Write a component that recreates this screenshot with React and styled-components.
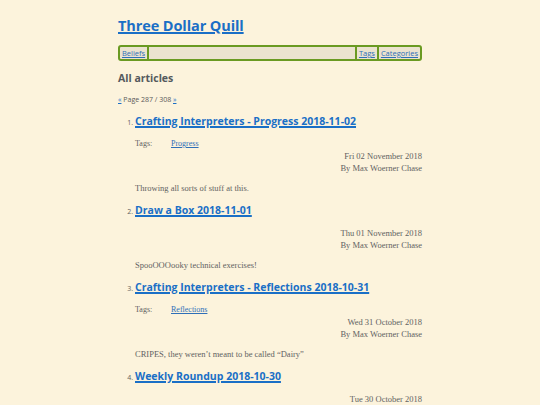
import React from 'react';
import styled, { createGlobalStyle } from 'styled-components';

const GlobalStyle = createGlobalStyle`
  html, body {
    margin: 0;
    padding: 0;
    background: #fcf3dc;
  }
  body {
    font-family: "Liberation Serif", serif;
    color: #626262;
  }
`;

const Page = styled.div`
  width: 304px;
  margin: 0 auto;
  padding-top: 13px;
`;

const SiteTitle = styled.h1`
  margin: 0;
  font-family: "Open Sans", sans-serif;
  font-size: 14.5px;
  font-weight: 700;
  line-height: 26px;
  letter-spacing: -0.1px;

  a {
    color: #1a6fc6;
    text-decoration: underline;
    text-decoration-thickness: 2px;
  }
`;

const Nav = styled.nav`
  display: flex;
  align-items: stretch;
  margin-top: 6px;
  height: 12px;
  border: 2px solid #6a9a22;
  border-radius: 3px;
  background: #ebe3cf;
  font-family: "Open Sans", sans-serif;
  font-size: 7.5px;
  line-height: 12px;
`;

const NavLink = styled.a`
  color: #2f6fb8;
  text-decoration: underline;
  padding: 0 2px;
  border-left: ${({ $sep }) => ($sep ? '2px solid #6a9a22' : 'none')};
  border-right: ${({ $end }) => ($end ? '2px solid #6a9a22' : 'none')};
`;

const NavSpacer = styled.div`
  flex: 1;
`;

const Heading = styled.h2`
  margin: 9px 0 0;
  font-family: "Open Sans", sans-serif;
  font-size: 10.5px;
  font-weight: 700;
  line-height: 16px;
  color: #555a5c;
`;

const Pager = styled.div`
  margin-top: 9px;
  font-family: "Open Sans", sans-serif;
  font-size: 7px;
  line-height: 10px;
  color: #5a5a5a;

  a {
    color: #1a6fc6;
  }
`;

const List = styled.ol`
  margin: 7px 0 0;
  padding-left: 17px;
`;

const Item = styled.li`
  font-family: "Open Sans", sans-serif;
  font-size: 7px;
  color: #626262;
  margin-bottom: 7px;
`;

const ItemTitle = styled.h3`
  margin: 0;
  font-family: "Open Sans", sans-serif;
  font-size: 10.5px;
  font-weight: 700;
  line-height: 18px;

  a {
    color: #1a6fc6;
    text-decoration: underline;
    text-decoration-thickness: 1.5px;
  }
`;

const Tags = styled.div`
  display: flex;
  margin-top: 8px;
  font-family: "Liberation Serif", serif;
  font-size: 8px;
  line-height: 12px;
`;

const TagLabel = styled.span`
  width: 36px;
`;

const TagLink = styled.a`
  color: #2f6fb8;
  text-decoration: underline;
`;

const Meta = styled.div`
  margin-top: ${({ $gap }) => $gap}px;
  text-align: right;
  font-family: "Liberation Serif", serif;
  font-size: 8.5px;
  line-height: 12px;
`;

const Summary = styled.p`
  margin: 8px 0 0;
  font-family: "Liberation Serif", serif;
  font-size: 8.5px;
  line-height: 12px;
`;

const articles = [
  {
    title: 'Crafting Interpreters - Progress 2018-11-02',
    tag: 'Progress',
    date: 'Fri 02 November 2018',
    summary: 'Throwing all sorts of stuff at this.',
  },
  {
    title: 'Draw a Box 2018-11-01',
    date: 'Thu 01 November 2018',
    summary: 'SpooOOOooky technical exercises!',
  },
  {
    title: 'Crafting Interpreters - Reflections 2018-10-31',
    tag: 'Reflections',
    date: 'Wed 31 October 2018',
    summary: 'CRIPES, they weren\u2019t meant to be called \u201cDairy\u201d',
  },
  {
    title: 'Weekly Roundup 2018-10-30',
    date: 'Tue 30 October 2018',
    summary: '',
  },
];

const App = () => (
  <>
    <GlobalStyle />
    <Page>
      <SiteTitle>
        <a href="#">Three Dollar Quill</a>
      </SiteTitle>
      <Nav>
        <NavLink href="#" $end>Beliefs</NavLink>
        <NavSpacer />
        <NavLink href="#" $sep>Tags</NavLink>
        <NavLink href="#" $sep>Categories</NavLink>
      </Nav>
      <Heading>All articles</Heading>
      <Pager>
        <a href="#">«</a> Page 287 / 308 <a href="#">»</a>
      </Pager>
      <List>
        {articles.map((a) => (
          <Item key={a.title}>
            <ItemTitle>
              <a href="#">{a.title}</a>
            </ItemTitle>
            {a.tag && (
              <Tags>
                <TagLabel>Tags:</TagLabel>
                <TagLink href="#">{a.tag}</TagLink>
              </Tags>
            )}
            <Meta $gap={a.tag ? 0 : 8}>
              {a.date}
              <br />
              By Max Woerner Chase
            </Meta>
            {a.summary && <Summary>{a.summary}</Summary>}
          </Item>
        ))}
      </List>
    </Page>
  </>
);

export default App;
